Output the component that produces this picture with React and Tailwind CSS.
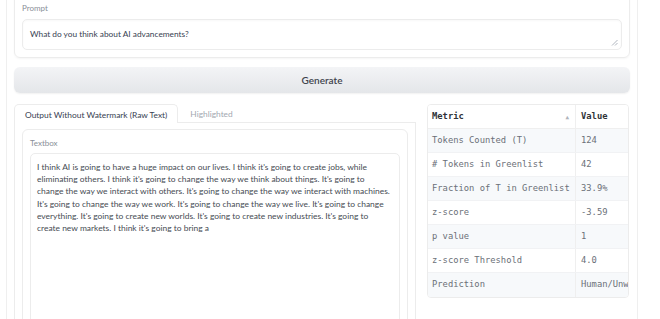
const lines = [
  "I think AI is going to have a huge impact on our lives. I think it's going to create jobs, while",
  "eliminating others. I think it's going to change the way we think about things. It's going to",
  "change the way we interact with others. It's going to change the way we interact with machines.",
  "It's going to change the way we work. It's going to change the way we live. It's going to change",
  "everything. It's going to create new worlds. It's going to create new industries. It's going to",
  "create new markets. I think it's going to bring a",
]

const rows = [
  ['Tokens Counted (T)', '124'],
  ['# Tokens in Greenlist', '42'],
  ['Fraction of T in Greenlist', '33.9%'],
  ['z-score', '-3.59'],
  ['p value', '1'],
  ['z-score Threshold', '4.0'],
  ['Prediction', 'Human/Unwatermarked'],
]

function ResizeHandle() {
  return (
    <svg width="7" height="7" viewBox="0 0 7 7" className="absolute right-[3px] bottom-[3px]">
      <path d="M6.5 1 L1 6.5 M6.5 4 L4 6.5" stroke="#9ca3af" strokeWidth="0.8" />
    </svg>
  )
}

export default function App() {
  return (
    <div className="w-[660px] h-[319px] overflow-hidden bg-white font-['Lato',sans-serif]">
      <div className="ml-[6px] w-[632px] h-[340px] -mt-[11px] border-x border-[#efefef] px-[7px] flex flex-col">

        {/* prompt */}
        <div className="border border-[#ececec] rounded-b-[6px] shadow-[0_1px_2px_rgba(0,0,0,0.04)] px-[7px] pt-[12px] pb-[7px]">
          <div className="text-[8px] leading-[12px] text-[#8a8f98]">Prompt</div>
          <div className="relative mt-[5px] h-[31px] border border-[#ececec] rounded-[5px] shadow-[inset_0_1px_2px_rgba(0,0,0,0.03)] px-[7px] flex items-center">
            <span className="text-[8.3px] text-[#374151]">What do you think about AI advancements?</span>
            <ResizeHandle />
          </div>
        </div>

        {/* generate */}
        <div className="mt-[9px] h-[26px] rounded-[6px] bg-gradient-to-b from-[#f3f4f6] to-[#e4e6e9] shadow-[0_1px_2px_rgba(0,0,0,0.06)] flex items-center justify-center">
          <span className="text-[10px] font-semibold text-[#3f444d]">Generate</span>
        </div>

        <div className="mt-[11px] grid grid-cols-[402px_1fr] gap-[11px] flex-1">
          {/* left column */}
          <div className="flex flex-col">
            <div className="flex h-[19px]">
              <div className="border-x border-t border-[#ececec] rounded-t-[5px] px-[10px] pt-[2px] flex items-center">
                <span className="text-[8.4px] text-[#374151] whitespace-nowrap">Output Without Watermark (Raw Text)</span>
              </div>
              <div className="flex-1 border-b border-[#ececec] px-[12px] pt-[2px] flex items-center">
                <span className="text-[8.4px] text-[#a3a8b0]">Highlighted</span>
              </div>
            </div>
            <div className="flex-1 border-x border-b border-[#ececec] px-[7px] pt-[6px]">
              <div className="h-full border border-[#ececec] rounded-[6px] px-[7px] pt-[7px] flex flex-col">
                <div className="text-[8px] leading-[12px] text-[#8a8f98]">Textbox</div>
                <div className="mt-[4px] flex-1 border border-[#ececec] rounded-[5px] px-[6px] pt-[7px]">
                  {lines.map((l, i) => (
                    <div key={i} className="text-[8.45px] leading-[12.2px] text-[#464b53] whitespace-nowrap">{l}</div>
                  ))}
                </div>
              </div>
            </div>
          </div>

          {/* right column */}
          <div className="pr-px">
            <div className="border border-[#ececec] rounded-[4px] overflow-hidden font-['DejaVu_Sans_Mono',monospace] text-[8.8px]">
              <div className="grid grid-cols-[148px_1fr] h-[24px] border-b border-[#efefef] bg-white">
                <div className="flex items-center justify-between pl-[4px] pr-[6px] border-r border-[#efefef]">
                  <span className="font-bold text-[#2f3338]">Metric</span>
                  <span className="text-[6px] text-[#b0b4ba]">▲</span>
                </div>
                <div className="flex items-center pl-[5px] font-bold text-[#2f3338]">Value</div>
              </div>
              {rows.map(([m, v], i) => (
                <div
                  key={m}
                  className={`grid grid-cols-[148px_1fr] h-[24px] ${i < rows.length - 1 ? 'border-b border-[#f1f2f4]' : ''} ${i % 2 === 0 ? 'bg-[#f7f9fb]' : 'bg-white'}`}>
                  <div className="flex items-center pl-[4px] border-r border-[#efefef] text-[#6b7078] whitespace-nowrap">{m}</div>
                  <div className="flex items-center pl-[5px] text-[#6b7078] whitespace-nowrap overflow-hidden">{v}</div>
                </div>
              ))}
            </div>
          </div>
        </div>
      </div>
    </div>
  )
}
